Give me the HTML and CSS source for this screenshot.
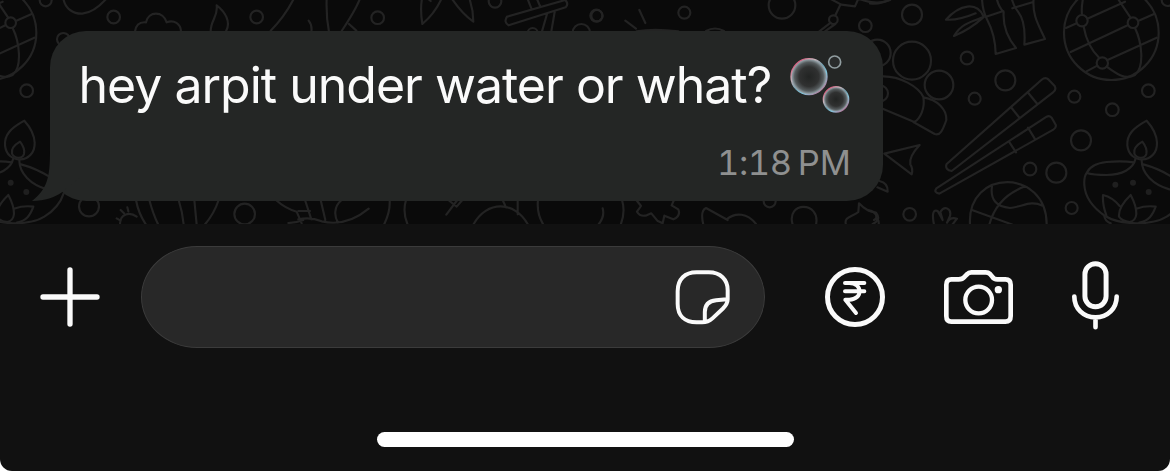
FILE: index.html
```html
<!DOCTYPE html>
<html lang="en">
<head>
<meta charset="utf-8">
<title>Chat</title>
<link rel="stylesheet" href="styles.css">
</head>
<body>
<main class="phone">
  <section class="chat">
    <svg class="wallpaper" viewBox="0 0 3510 672" aria-hidden="true">
      <defs>
        <g id="globe">
          <circle cx="724" cy="98" r="142"/>
          <path d="M640-10C635 15 634 28 636 45M641 80C648 120 665 152 688 174M710 200C740 222 765 240 795 225C825 200 815 125 795 84M746 0L781 52M588 84L620 70M652 56L765 5M602 156L773 76M806 62L852 42M648 215L682 197M711 181L860 113"/>
          <circle cx="636" cy="62" r="17"/><circle cx="789" cy="68" r="16"/><circle cx="697" cy="189" r="17"/>
        </g>
        <g id="lamp">
          <path d="M830 362C788 385 770 405 772 436C775 465 795 478 817 478C842 478 862 458 861 428C860 402 848 382 830 362Z"/>
          <path d="M817 425C798 436 790 448 793 461C800 476 824 478 829 462C832 448 825 435 817 425Z"/>
          <path d="M797 475C790 508 755 525 710 525Q670 525 650 519C658 500 675 490 710 486Q755 482 792 487M650 519C643 528 642 540 643 555C645 590 668 622 705 648C750 675 845 678 890 650C925 628 940 605 948 580M815 480C814 520 850 555 898 568M820 493Q865 505 905 530"/>
          <path d="M709 646Q697 614 699 585Q728 592 749 618M782 585C758 608 745 630 747 650Q757 664 779 666Q797 662 799 642C799 615 790 600 782 585ZM799 626Q828 616 857 620C848 646 836 662 808 668M703 648C704 658 712 666 722 670"/>
          <circle class="dot" cx="736" cy="554" r="9"/><circle class="dot" cx="789" cy="548" r="9"/><circle class="dot" cx="836" cy="576" r="9"/>
        </g>
      </defs>
      <g transform="translate(-757)"><use href="#globe"/><use href="#lamp"/></g>
      <g>
        <circle cx="137" cy="1" r="18"/><circle cx="341" cy="51" r="19"/><circle cx="770" cy="51" r="19"/><circle cx="80" cy="272" r="19"/><circle cx="190" cy="118" r="19"/><circle cx="267" cy="619" r="30"/><circle cx="734" cy="642" r="31"/>
        <path d="M190-5C195 28 222 42 247 41C278 38 300 18 320-5M405 94C408 75 420 65 438 67C445 32 490 32 500 67C522 58 542 72 543 94M632 94C632 60 655 50 650 16C675 35 694 65 678 94M812 92Q854 50 882-5"/>
        <path d="M408 600Q415 640 438 674M448 600Q460 645 475 674M536 600Q548 638 551 674M583 600L590 674M656 600Q642 642 614 674M360 672C360 640 390 635 410 650M350 655L362 662M362 630L372 640M382 622L385 634M828 600Q855 625 890 635L905 670M865 669Q890 668 910 660"/>
      </g>
      <g transform="translate(900)">
        <circle cx="233" cy="53" r="19"/><circle cx="585" cy="4" r="19"/><circle cx="889" cy="47" r="18"/><circle cx="698" cy="99" r="15"/><circle cx="844" cy="98" r="26"/>
        <path d="M80-5Q78 50 87 96M180-5Q170 25 125 93M147 72L169 92M26 62Q37 75 34 96M366-5Q360 30 367 72Q405 40 425-5M455-5Q485 40 520 65Q520 30 508-5M388 0L392 3M682-5L694 25M710-5L720 18M621 50L796 0Q807 12 797 22L626 76Q610 67 621 50M741 42L726 94M764 36L754 94"/>
        <path d="M-5 633H30M15 600L34 658M62 600L76 660M-5 658Q32 650 65 664C115 676 165 660 206 626M125 600C100 620 103 650 114 668M269 600C271 630 263 652 252 674M318 600Q307 636 323 674M439 644L472 600M445 600L470 620L487 600M520 674C560 600 645 602 684 674M608 600L618 622M653 600V643M714 600C710 635 719 656 730 674"/>
      </g>
      <g transform="translate(1800)">
        <circle cx="253" cy="38" r="18"/><circle cx="-9" cy="47" r="17"/><circle cx="546" cy="16" r="40"/><circle cx="796" cy="77" r="19"/><circle cx="700" cy="59" r="13"/><circle cx="509" cy="604" r="18"/>
        <path d="M76 62L108 86M118 30L136 69M110 94Q160 85 235 94M318 93Q345 78 372 93M658 94L692 68M675 94L706 72M721 14L706 46M692-3L724 14L765 19L775-4Q830 17 870 0"/>
        <path d="M8 625Q15 650-5 674M66 600Q77 636 62 674M109 600L123 618L111 635Q120 651 140 646L154 640L172 662L188 670L193 647L220 658Q243 648 235 628L215 616L222 600M310 674Q300 632 318 624L383 660M380 658C407 635 443 640 468 672M578 674C557 603 663 603 648 674M738 674C730 650 758 650 775 636L777 610Q800 635 828 638Q845 660 818 672"/>
      </g>
      <g transform="translate(2610)">
        <use href="#globe"/><use href="#lamp"/>
        <circle cx="126" cy="44" r="30"/><circle cx="126" cy="182" r="57"/><circle cx="207" cy="255" r="43"/><circle cx="22" cy="159" r="40"/><circle cx="291" cy="174" r="19"/><circle cx="406" cy="241" r="30"/><circle cx="314" cy="296" r="18"/><circle cx="613" cy="290" r="18"/><circle cx="727" cy="329" r="19"/><circle cx="835" cy="272" r="19"/><circle cx="633" cy="421" r="30"/><circle cx="480" cy="507" r="19"/><circle cx="559" cy="518" r="30"/><circle cx="605" cy="624" r="18"/><circle cx="119" cy="643" r="19"/><circle cx="30" cy="280" r="24"/><circle cx="893" cy="0" r="18"/>
        <path d="M0 10Q30 14 64-3M340 48C320 5 270 12 228 59Q265 62 317 40M338 52C300 66 272 73 252 108Q300 88 340 52M336-5Q337 32 352 60Q376 105 377 162L438 144Q397 95 401 36Q386 22 380-5M346 51L400 33M425-5Q430 18 444 35Q468 65 463 134L525 117C505 74 486 45 491-5M427 25L490 6"/>
        <path d="M38 229C90 228 145 260 160 291C166 325 150 357 133 366L38 326M160 292C203 299 231 329 229 360C218 391 211 408 194 402L130 366M43 461L149 435Q116 470 121 493Q130 507 125 523ZM28 543Q55 549 53 575L22 562"/>
        <path d="M230 492L514 240Q526 230 536 239L554 258Q560 270 549 277L245 513C232 512 225 503 230 492ZM475 279L502 312M425 324L449 354M199 565L530 350Q538 346 545 353L557 374Q560 383 550 389L208 581Q190 578 199 565ZM417 425L438 457M474 383L496 419"/>
        <path d="M300 674C290 504 531 504 530 674M366 559C360 600 380 620 420 624C460 620 480 600 518 617M358 674Q380 590 466 559M308 631L428 674M192 674C185 640 190 628 203 633L218 660L211 636C224 615 245 626 240 648L231 668Q240 650 261 656L247 674M-5 631C20 634 25 655 12 660Q28 650 26 674"/>
      </g>
    </svg>
    <article class="bubble">
      <svg class="tail" viewBox="0 0 50 50" aria-hidden="true"><path d="M18 0C18 27 15 38 0 50C13 50 23 46 29.500 41.500L50 25V0Z"/></svg>
      <p class="message"><span class="words">hey arpit under water or what?</span>
        <svg class="emoji" viewBox="0 0 180 174" role="img" aria-label="Bubbles">
          <defs>
            <radialGradient id="film"><stop offset="0" stop-color="#222423"/><stop offset=".55" stop-color="#303131"/><stop offset=".8" stop-color="#555b5d"/><stop offset=".93" stop-color="#8a969c"/><stop offset="1" stop-color="#a9b4b9"/></radialGradient>
            <linearGradient id="rim" x1=".15" y1=".1" x2=".85" y2=".9"><stop offset="0" stop-color="#d4587b"/><stop offset=".25" stop-color="#c9b1b8"/><stop offset=".5" stop-color="#719ead"/><stop offset=".72" stop-color="#82c5dc"/><stop offset="1" stop-color="#b27a9a"/></linearGradient>
          </defs>
          <g fill="url(#film)" stroke="url(#rim)">
            <circle cx="57" cy="65" r="54" stroke-width="4"/><circle cx="138" cy="133" r="38" stroke-width="4"/><circle cx="134" cy="21" r="18" stroke-width="5" fill="#292b2b" stroke="#919da0"/>
          </g>
        </svg>
      </p>
      <time class="time"><span class="clock">1:18</span><span class="period">PM</span></time>
    </article>
  </section>
  <footer class="composer">
    <div class="tools">
      <svg class="icon plus" viewBox="0 0 180 180"><path d="M90 9V171M9 90H171" stroke-width="16"/></svg>
      <div class="field">
        <svg class="icon sticker" viewBox="0 0 164 166"><path d="M64 7H101C136 7 158 29 158 61V88C158 101 152 108 143 117L112 146C101 156 94 158 81 158H64C29 158 7 139 7 102V64C7 28 29 7 64 7ZM155 88L123 91C99 93 89 105 89 127V155" stroke-width="12"/></svg>
      </div>
      <svg class="icon rupee" viewBox="0 0 180 180"><circle cx="90" cy="90" r="82.500" stroke-width="15"/><path d="M60 48H118M60 73H118M60 48H73C114 48 114 98 73 98H61L93 138" stroke-width="12"/></svg>
      <svg class="icon camera" viewBox="0 0 207 162"><path d="M22 28H44C52 28 57 26 62 20L70 12Q74 7 82 7H125Q133 7 138 12L145 20Q150 28 160 28H184Q200 28 200 44V138Q200 155 184 155H22Q7 155 7 138V44Q7 28 22 28Z" stroke-width="14"/><circle cx="104" cy="90" r="40" stroke-width="13"/><circle class="lens" cx="163" cy="59" r="11"/></svg>
      <svg class="icon mic" viewBox="0 0 142 206"><rect x="39" y="7" width="64" height="130" rx="32" stroke-width="15"/><path d="M7 106C7 142 34 169 71 169S135 142 135 106M71 169V199" stroke-width="14"/></svg>
    </div>
    <div class="home-indicator"></div>
  </footer>
</main>
</body>
</html>
```

FILE: styles.css
```css
* {
  box-sizing: border-box;
}

body {
  margin: 0;
  background: #fff;
  font-family: Inter, "Liberation Sans", sans-serif;
}

.phone {
  width: 1170px;
  height: 471px;
  overflow: hidden;
  border-radius: 0 0 12px 12px;
  background: #111;
}

.chat {
  position: relative;
  height: 224px;
  padding: 31px 0 0 50px;
  overflow: hidden;
  background: #0a0a0a;
}

.wallpaper {
  position: absolute;
  inset: 0;
  width: 1170px;
  height: 224px;
  fill: none;
  stroke: #232323;
  stroke-width: 6.5;
  stroke-linecap: round;
  stroke-linejoin: round;
}

.dot {
  fill: #1f1f1f;
  stroke: none;
}

.bubble {
  position: relative;
  display: flex;
  flex-direction: column;
  width: 833px;
  height: 170px;
  padding: 24px 33px 0 29px;
  border-radius: 36px;
  background: #242625;
}

.tail {
  position: absolute;
  left: -18px;
  bottom: 0;
  width: 50px;
  height: 50px;
  fill: #242625;
}

.message {
  display: flex;
  justify-content: space-between;
  height: 60px;
  margin: 0;
  color: #fafafa;
  font-size: 50px;
  letter-spacing: -1px;
  line-height: 60px;
  white-space: nowrap;
}

.words {
  margin-left: -0.5px;
}

.emoji {
  flex: none;
  width: 60px;
  height: 58px;
}

.time {
  display: flex;
  justify-content: flex-end;
  gap: 6px;
  margin-top: 27px;
  color: #8f9090;
  font-size: 34.500px;
  line-height: 42px;
}

.clock {
  font-variant-numeric: tabular-nums;
  letter-spacing: -0.4px;
}

.period {
  margin-right: -1px;
}

.composer {
  display: flex;
  flex-direction: column;
  align-items: center;
  height: 247px;
  padding-top: 22px;
}

.tools {
  display: flex;
  align-items: center;
  width: 1170px;
  height: 102px;
  padding-left: 40px;
}

.icon {
  flex: none;
  fill: none;
  stroke: #fafafa;
  stroke-linecap: round;
  stroke-linejoin: round;
}

.plus,
.rupee {
  width: 60px;
  height: 60px;
}

.field {
  display: flex;
  align-items: center;
  justify-content: flex-end;
  width: 624px;
  height: 102px;
  margin: 0 60px 0 41px;
  padding-right: 34px;
  border: 1px solid #3b3b3b;
  border-radius: 56px / 51px;
  background: #282828;
}

.sticker {
  width: 55px;
  height: 55px;
}

.camera {
  width: 69px;
  height: 54px;
  margin: 0 58.5px 0 59px;
}

.lens {
  fill: #fafafa;
  stroke: none;
}

.mic {
  width: 47px;
  height: 69px;
  margin-top: -4px;
}

.home-indicator {
  width: 417px;
  height: 15px;
  margin-top: 84px;
  border-radius: 8px;
  background: #fff;
}
```
